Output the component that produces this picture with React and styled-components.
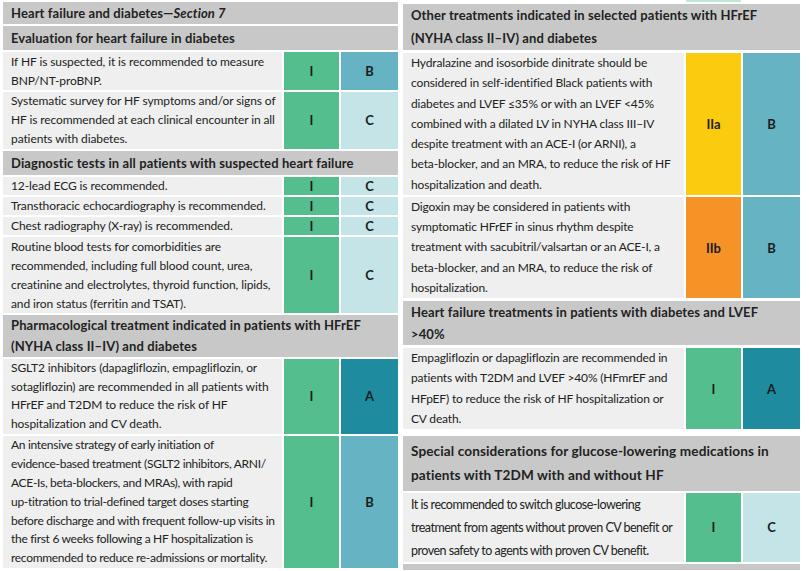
import React from 'react';
import styled, { createGlobalStyle } from 'styled-components';

const GlobalStyle = createGlobalStyle`
  html, body {
    margin: 0;
    padding: 0;
    background: #ffffff;
  }
  body {
    font-family: Lato, "Liberation Sans", sans-serif;
    color: #1e1e1e;
  }
`;

const CLASS_COLORS = {
  I: '#54be8f',
  IIa: '#fbcb10',
  IIb: '#f69327',
};

const LEVEL_COLORS = {
  A: '#1e8c9e',
  B: '#66b4c3',
  C: '#c4e4e8',
};

const Page = styled.div`
  width: 809px;
  height: 571px;
  overflow: hidden;
  display: flex;
  gap: 5px;
  padding: 0 0 0 3px;
  box-sizing: border-box;
`;

const Column = styled.div`
  width: ${(p) => p.$width}px;
  flex: none;
  padding-top: ${(p) => p.$top || 0}px;
  display: flex;
  flex-direction: column;
  gap: 2px;
`;

const Header = styled.div`
  background: #c8c8c8;
  font-weight: 700;
  font-size: ${(p) => p.$size || 13}px;
  line-height: ${(p) => p.$lh || 22}px;
  padding: ${(p) => p.$pad || 0}px 8px;
  margin-top: ${(p) => p.$gapTop || 0}px;
  white-space: nowrap;
  overflow: hidden;
  letter-spacing: 0.1px;
  color: #222;

  em {
    font-style: italic;
  }
`;

const Row = styled.div`
  display: grid;
  grid-template-columns: minmax(0, 1fr) ${(p) => p.$cls}px ${(p) => p.$lvl}px;
  gap: 2px;
`;

const Text = styled.div`
  background: #eeefee;
  font-size: ${(p) => p.$size || 12}px;
  line-height: ${(p) => p.$lh}px;
  padding: 0 6px 0 8px;
  white-space: nowrap;
  overflow: hidden;
  letter-spacing: ${(p) => (p.$ls === undefined ? -0.1 : p.$ls)}px;
  color: #222;
`;

const Badge = styled.div`
  background: ${(p) => p.$bg};
  display: flex;
  align-items: center;
  justify-content: center;
  font-weight: 700;
  font-size: 13px;
  color: #1c1c1c;
`;

const Carry = styled.div`
  grid-column: 2;
  height: 2px;
  background: #bfe8d6;
`;

const Tail = styled.div`
  height: 6px;
  background: #c8c8c8;
`;

const left = [
  { kind: 'title' },
  { kind: 'head', lines: ['Evaluation for heart failure in diabetes'], lh: 24 },
  {
    kind: 'row',
    lh: 19,
    cls: 'I',
    lvl: 'B',
    lines: ['If HF is suspected, it is recommended to measure', 'BNP/NT-proBNP.'],
  },
  {
    kind: 'row',
    lh: 18.9,
    cls: 'I',
    lvl: 'C',
    lines: [
      'Systematic survey for HF symptoms and/or signs of',
      'HF is recommended at each clinical encounter in all',
      'patients with diabetes.',
    ],
  },
  { kind: 'head', lines: ['Diagnostic tests in all patients with suspected heart failure'], lh: 24 },
  { kind: 'row', lh: 18, cls: 'I', lvl: 'C', lines: ['12-lead ECG is recommended.'] },
  { kind: 'row', lh: 18, cls: 'I', lvl: 'C', lines: ['Transthoracic echocardiography is recommended.'] },
  { kind: 'row', lh: 18, cls: 'I', lvl: 'C', lines: ['Chest radiography (X-ray) is recommended.'] },
  {
    kind: 'row',
    lh: 19,
    cls: 'I',
    lvl: 'C',
    lines: [
      'Routine blood tests for comorbidities are',
      'recommended, including full blood count, urea,',
      'creatinine and electrolytes, thyroid function, lipids,',
      'and iron status (ferritin and TSAT).',
    ],
  },
  {
    kind: 'head',
    lh: 21,
    lines: ['Pharmacological treatment indicated in patients with HFrEF', '(NYHA class II–IV) and diabetes'],
  },
  {
    kind: 'row',
    lh: 18.8,
    cls: 'I',
    lvl: 'A',
    lines: [
      'SGLT2 inhibitors (dapagliflozin, empagliflozin, or',
      'sotagliflozin) are recommended in all patients with',
      'HFrEF and T2DM to reduce the risk of HF',
      'hospitalization and CV death.',
    ],
  },
  {
    kind: 'row',
    lh: 18.9,
    cls: 'I',
    lvl: 'B',
    ls: -0.3,
    lines: [
      'An intensive strategy of early initiation of',
      'evidence-based treatment (SGLT2 inhibitors, ARNI/',
      'ACE-Is, beta-blockers, and MRAs), with rapid',
      'up-titration to trial-defined target doses starting',
      'before discharge and with frequent follow-up visits in',
      'the first 6 weeks following a HF hospitalization is',
      'recommended to reduce re-admissions or mortality.',
    ],
  },
];

const right = [
  {
    kind: 'head',
    lh: 23,
    lines: ['Other treatments indicated in selected patients with HFrEF', '(NYHA class II–IV) and diabetes'],
  },
  {
    kind: 'row',
    lh: 20.3,
    cls: 'IIa',
    lvl: 'B',
    ls: -0.15,
    gapTop: 1,
    lines: [
      'Hydralazine and isosorbide dinitrate should be',
      'considered in self-identified Black patients with',
      'diabetes and LVEF ≤35% or with an LVEF <45%',
      'combined with a dilated LV in NYHA class III–IV',
      'despite treatment with an ACE-I (or ARNI), a',
      'beta-blocker, and an MRA, to reduce the risk of HF',
      'hospitalization and death.',
    ],
  },
  {
    kind: 'row',
    lh: 20.2,
    cls: 'IIb',
    lvl: 'B',
    ls: -0.15,
    lines: [
      'Digoxin may be considered in patients with',
      'symptomatic HFrEF in sinus rhythm despite',
      'treatment with sacubitril/valsartan or an ACE-I, a',
      'beta-blocker, and an MRA, to reduce the risk of',
      'hospitalization.',
    ],
  },
  {
    kind: 'head',
    lh: 22,
    gapTop: 1,
    lines: ['Heart failure treatments in patients with diabetes and LVEF', '>40%'],
  },
  {
    kind: 'row',
    lh: 20.2,
    cls: 'I',
    lvl: 'A',
    ls: -0.15,
    gapTop: 1,
    lines: [
      'Empagliflozin or dapagliflozin are recommended in',
      'patients with T2DM and LVEF >40% (HFmrEF and',
      'HFpEF) to reduce the risk of HF hospitalization or',
      'CV death.',
    ],
  },
  {
    kind: 'head',
    lh: 24.5,
    pad: 3,
    size: 13.6,
    gapTop: 5,
    lines: ['Special considerations for glucose-lowering medications in', 'patients with T2DM with and without HF'],
  },
  {
    kind: 'row',
    lh: 23,
    cls: 'I',
    lvl: 'C',
    size: 12.5,
    ls: -0.5,
    lines: [
      'It is recommended to switch glucose-lowering',
      'treatment from agents without proven CV benefit or',
      'proven safety to agents with proven CV benefit.',
    ],
  },
];

const Lines = ({ lines }) =>
  lines.map((l, i) => (
    <React.Fragment key={i}>
      {i > 0 && <br />}
      {l}
    </React.Fragment>
  ));

const Block = ({ item, cls, lvl }) => {
  if (item.kind === 'title') {
    return (
      <Header $lh={22}>
        Heart failure and diabetes—<em>Section 7</em>
      </Header>
    );
  }
  if (item.kind === 'head') {
    return (
      <Header $lh={item.lh} $pad={item.pad} $size={item.size} $gapTop={item.gapTop}>
        <Lines lines={item.lines} />
      </Header>
    );
  }
  return (
    <Row $cls={cls} $lvl={lvl} style={item.gapTop ? { marginTop: item.gapTop } : undefined}>
      <Text $lh={item.lh} $ls={item.ls} $size={item.size}>
        <Lines lines={item.lines} />
      </Text>
      <Badge $bg={CLASS_COLORS[item.cls]}>{item.cls}</Badge>
      <Badge $bg={LEVEL_COLORS[item.lvl]}>{item.lvl}</Badge>
    </Row>
  );
};

const App = () => {
  return (
    <>
      <GlobalStyle />
      <Page>
        <Column $width={395} $top={2}>
          {left.map((item, i) => (
            <Block key={i} item={item} cls={55} lvl={57} />
          ))}
        </Column>
        <Column $width={397}>
          <Row $cls={55} $lvl={57}>
            <Carry />
          </Row>
          {right.map((item, i) => (
            <Block key={i} item={item} cls={55} lvl={57} />
          ))}
          <Tail />
        </Column>
      </Page>
    </>
  );
};

export default App;
